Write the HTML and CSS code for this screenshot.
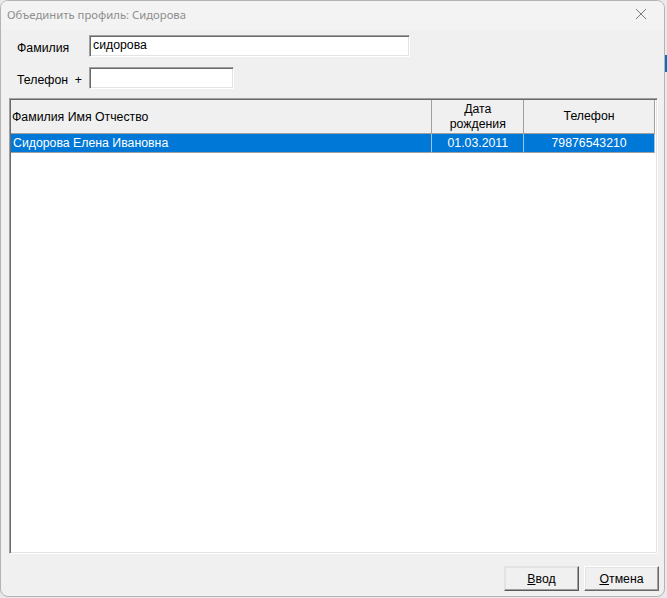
FILE: index.html
```html
<!DOCTYPE html>
<html lang="ru">
<head>
<meta charset="utf-8">
<title>Объединить профиль</title>
<link rel="stylesheet" href="styles.css">
</head>
<body>
<div class="backdrop-strip"></div>
<div class="window">
  <div class="titlebar">
    <span class="title">Объединить профиль: Сидорова</span>
    <span class="close">
      <svg width="12" height="12" viewBox="0 0 12 12"><path d="M1 1 L11 11 M11 1 L1 11" stroke="#7a7a7a" stroke-width="1" fill="none"/></svg>
    </span>
  </div>
  <div class="content">
    <div class="field-row">
      <label class="label">Фамилия</label>
      <div class="input input-wide">сидорова</div>
    </div>
    <div class="field-row row2">
      <label class="label">Телефон&nbsp; +</label>
      <div class="input input-short"></div>
    </div>
    <div class="grid">
      <div class="grid-head">
        <div class="hcell c1 left">Фамилия Имя Отчество</div>
        <div class="hcell c2">Дата<br>рождения</div>
        <div class="hcell c3">Телефон</div>
      </div>
      <div class="grid-row selected">
        <div class="cell c1 left row-left">Сидорова Елена Ивановна</div>
        <div class="cell c2">01.03.2011</div>
        <div class="cell c3">79876543210</div>
      </div>
    </div>
    <div class="buttons">
      <button class="btn default"><u>В</u>вод</button>
      <button class="btn"><u>О</u>тмена</button>
    </div>
  </div>
</div>
</body>
</html>
```

FILE: styles.css
```css
html, body {
  margin: 0;
  padding: 0;
}
body {
  width: 667px;
  height: 598px;
  background: #e9e9e9;
  position: relative;
  overflow: hidden;
  font-family: "Liberation Sans", Arial, sans-serif;
  font-size: 12.3px;
  color: #000;
}
.backdrop-strip {
  position: absolute;
  left: 665px;
  top: 55px;
  width: 2px;
  height: 17px;
  background: #0a6fc2;
}
.window {
  position: relative;
  width: 663px;
  height: 595px;
  border: 1px solid #b4b4b4;
  border-radius: 8px;
  background: #f0f0f0;
  overflow: hidden;
}
.titlebar {
  height: 29px;
  background: #f3f3f3;
  display: flex;
  align-items: center;
  justify-content: space-between;
  padding-left: 6px;
  padding-right: 17px;
}
.title {
  font-family: "Noto Sans", "Open Sans", sans-serif;
  font-size: 11.3px;
  color: #8e8e8e;
  padding-bottom: 3px;
}
.close {
  display: flex;
  width: 12px;
  height: 12px;
  margin-top: -4px;
}
.content {
  padding: 5px 5px 0 8px;
}
.field-row {
  display: flex;
  align-items: flex-start;
}
.row2 {
  margin-top: 10px;
}
.label {
  width: 80px;
  padding-left: 8px;
  box-sizing: border-box;
  padding-top: 6px;
  line-height: 15px;
}
.input {
  box-sizing: border-box;
  height: 22px;
  background: #fff;
  border: 1px solid;
  border-color: #a0a0a0 #ffffff #ffffff #a0a0a0;
  box-shadow: inset 1px 1px 0 #696969, inset -1px -1px 0 #e3e3e3;
  padding: 2px 3px;
  line-height: 15px;
}
.input-wide { width: 321px; }
.input-short { width: 145px; }
.grid {
  margin-top: 9px;
  width: 649px;
  height: 456px;
  box-sizing: border-box;
  background: #fff;
  border: 1px solid;
  border-color: #a0a0a0 #ffffff #ffffff #a0a0a0;
  box-shadow: inset 1px 1px 0 #696969, inset -1px -1px 0 #e3e3e3;
  padding: 1px 2px 2px 1px;
}
.grid-head, .grid-row {
  display: flex;
}
.grid-head {
  height: 34px;
  background: #f0f0f0;
  box-sizing: border-box;
  border-bottom: 1px solid #a0a0a0;
}
.hcell, .cell {
  box-sizing: border-box;
  display: flex;
  align-items: center;
  justify-content: center;
  text-align: center;
  line-height: 15px;
  white-space: nowrap;
}
.left {
  justify-content: flex-start;
  text-align: left;
  padding-left: 1px;
}
.row-left {
  padding-left: 2px;
}
.c1 { width: 421px; }
.c2 { width: 92px; border-left: 1px solid #a0a0a0; }
.c3 { width: 132px; border-left: 1px solid #a0a0a0; border-right: 1px solid #a0a0a0; }
.hcell.c1 { padding-top: 1px; }
.grid-row {
  height: 19px;
}
.grid-row .cell {
  border-bottom: 1px solid #a0a0a0;
  padding-top: 1px;
}
.grid-row .c2, .grid-row .c3 {
  border-left-color: #a0c4e6;
}
.grid-row .c3 {
  border-right-color: #a0c4e6;
}
.selected {
  background: #0078d7;
  color: #fff;
}
.buttons {
  display: flex;
  justify-content: flex-end;
  gap: 5px;
  margin-top: 12px;
  padding-right: 0;
}
.btn {
  width: 75px;
  height: 25px;
  box-sizing: border-box;
  font-family: "Liberation Sans", Arial, sans-serif;
  font-size: 12.3px;
  color: #000;
  background: #f0f0f0;
  border: 1px solid;
  border-color: #ffffff #696969 #696969 #ffffff;
  box-shadow: inset -1px -1px 0 #a0a0a0, inset 1px 1px 0 #e3e3e3;
  padding: 0;
  margin: 0;
}
.btn.default {
  border-color: #e3e3e3 #5a5a5a #5a5a5a #e3e3e3;
}
```
